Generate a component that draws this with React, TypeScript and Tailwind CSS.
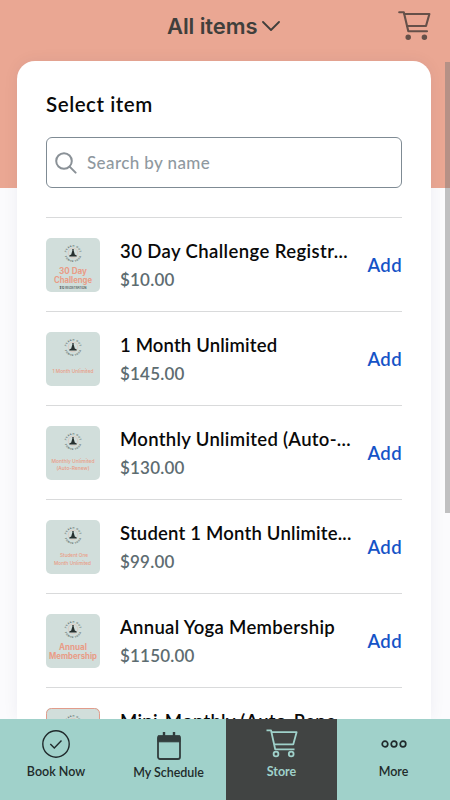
import React from "react";

type Line = { text: string; x: number; y: number; size: number; dark?: boolean; width: number };
type Item = { name: string; price: string; spacing: string; art: Line[]; framed?: boolean };

const items: Item[] = [
  {
    name: "30 Day Challenge Registr...",
    price: "$10.00",
    spacing: "tracking-[0.4px]",
    art: [
      { text: "30 Day", x: 27, y: 35.8, size: 8.3, width: 28 },
      { text: "Challenge", x: 27, y: 44.5, size: 8.3, width: 38 },
      { text: "$10 REGISTRATION", x: 27, y: 50.6, size: 3.2, dark: true, width: 27 },
    ],
  },
  {
    name: "1 Month Unlimited",
    price: "$145.00",
    spacing: "tracking-[0.15px]",
    art: [{ text: "1 Month Unlimited", x: 27, y: 41, size: 5.2, width: 41 }],
  },
  {
    name: "Monthly Unlimited (Auto-...",
    price: "$130.00",
    spacing: "tracking-[0.3px]",
    art: [
      { text: "Monthly Unlimited", x: 27, y: 37.3, size: 5.3, width: 43 },
      { text: "(Auto-Renew)", x: 27, y: 43.8, size: 5.3, width: 33 },
    ],
  },
  {
    name: "Student 1 Month Unlimite...",
    price: "$99.00",
    spacing: "tracking-[0.2px]",
    art: [
      { text: "Student One", x: 28, y: 37.3, size: 5.2, width: 28 },
      { text: "Month Unlimited", x: 26.5, y: 44.5, size: 5.2, width: 37 },
    ],
  },
  {
    name: "Annual Yoga Membership",
    price: "$1150.00",
    spacing: "tracking-[0.32px]",
    art: [
      { text: "Annual", x: 27, y: 36.2, size: 8.4, width: 28 },
      { text: "Membership", x: 27, y: 45, size: 8.4, width: 48 },
    ],
  },
  {
    name: "Mini-Monthly (Auto-Rene...",
    price: "$89.00",
    spacing: "tracking-[0.25px]",
    framed: true,
    art: [],
  },
];

function Thumb({ item }: { item: Item }) {
  return (
    <svg viewBox="0 0 54 54" className="h-[54px] w-[54px] shrink-0" fontFamily="Inter, sans-serif">
      <defs>
        <path id="arcTop" d="M20.2 15.5a6.8 6.8 0 0 1 13.6 0" />
        <path id="arcBottom" d="M18.4 15.5a8.6 8.6 0 0 0 17.2 0" />
      </defs>
      <rect width="54" height="54" rx="5" fill="#d1dedb" />
      {item.framed && <rect x="0.5" y="0.5" width="53" height="53" rx="5" fill="none" stroke="#e29c8b" />}
      <circle cx="27" cy="15" r="4.8" fill="none" stroke="#e3b9ab" strokeWidth="0.5" />
      <g fontSize="2.4" fontWeight="600" fill="#4a5654">
        <text textAnchor="middle">
          <textPath href="#arcTop" startOffset="50%" textLength="19">PEACH OUT</textPath>
        </text>
        <text textAnchor="middle">
          <textPath href="#arcBottom" startOffset="50%" textLength="21">POWER YOGA</textPath>
        </text>
      </g>
      <g fill="#27302f">
        <circle cx="27" cy="12" r="0.9" />
        <path d="M26.2 13.1h1.6l1 3.4 1.9 1v1h-7.4v-1l1.9-1z" />
      </g>
      {item.art.map((l) => (
        <text
          key={l.text}
          x={l.x}
          y={l.y}
          fontSize={l.size}
          fontWeight={l.size > 7 ? 700 : 500}
          fill={l.dark ? "#34403e" : "#e99c86"}
          textAnchor="middle"
          textLength={l.width}
          lengthAdjust="spacingAndGlyphs"
        >
          {l.text}
        </text>
      ))}
    </svg>
  );
}

function HeaderCart() {
  return (
    <svg viewBox="0 0 33 30" className="h-[30px] w-[33px]" fill="none" stroke="#655049" strokeWidth="2.1" strokeLinecap="round" strokeLinejoin="round">
      <path d="M1.2 1.3H5.8L10.3 20.3H29" />
      <path d="M6.5 3H31.4L28 15H9.3" />
      <circle cx="10.2" cy="26.3" r="1.7" fill="#655049" />
      <circle cx="26.4" cy="26.3" r="1.7" fill="#655049" />
    </svg>
  );
}

function StoreCart() {
  return (
    <svg viewBox="0 0 32 30" className="h-[30px] w-8" fill="none" stroke="#9fd1ca" strokeWidth="1.8" strokeLinejoin="round">
      <path d="M.5 1.3H5L9.2 20.3H28.5" />
      <path d="M5.5 3.2H30.6L27.3 15.3H8.2" />
      <circle cx="10" cy="25" r="2.4" />
      <circle cx="25.2" cy="25" r="2.4" />
    </svg>
  );
}

export default function App() {
  return (
    <div className="relative flex h-[800px] w-[450px] flex-col overflow-hidden bg-[linear-gradient(to_bottom,#eaa793_188px,#fbfbfd_188px)] font-['Lato','Open_Sans',sans-serif]">
      <header className="flex h-[61px] shrink-0 items-start pl-[167px] pr-[19px]">
        <h1 className="mt-[11px] whitespace-nowrap font-['Inter',sans-serif] text-[22px] font-semibold leading-[30px] tracking-[-0.1px] text-[#403f3c]">
          All items
        </h1>
        <svg viewBox="0 0 18 10" className="ml-[5px] mt-[21px] h-[10px] w-[18px]" fill="none" stroke="#403f3c" strokeWidth="1.8" strokeLinecap="round" strokeLinejoin="round">
          <path d="M1 1l8 8 8-8" />
        </svg>
        <div className="ml-auto mt-[11px]">
          <HeaderCart />
        </div>
      </header>

      <main className="ml-[17px] min-h-0 w-[414px] flex-1 overflow-hidden rounded-t-[18px] bg-white px-[29px] shadow-[0_0_16px_rgba(40,40,80,0.06)]">
        <h2 className="mt-[29px] text-[20.5px] font-semibold leading-7 tracking-[0.55px] text-[#090909]">Select item</h2>
        <div className="mt-[19px] flex h-[51px] items-center rounded-[6px] border border-[#7f8b94] pl-2">
          <svg viewBox="0 0 22 22" className="h-[22px] w-[22px]" fill="none" stroke="#8a9197" strokeWidth="2" strokeLinecap="round">
            <circle cx="9" cy="9" r="7.8" />
            <path d="M14.6 14.6l6 6" />
          </svg>
          <span className="ml-[10px] text-[17px] font-medium leading-6 tracking-[0.4px] text-[#8f999f]">Search by name</span>
        </div>
        <ul className="mt-[29px]">
          {items.map((item) => (
            <li key={item.name} className="flex h-[94px] items-center border-t border-[#d9dadb] pb-px pt-[2px]">
              <Thumb item={item} />
              <div className="ml-5 min-w-0 flex-1 pt-px">
                <div className={`whitespace-nowrap text-[18.5px] font-semibold leading-7 text-[#090909] ${item.spacing}`}>{item.name}</div>
                <div className="text-[17px] font-semibold leading-[30px] tracking-[0.2px] text-[#5d6c71]">{item.price}</div>
              </div>
              <span className="text-[18.5px] font-semibold leading-7 tracking-[0.4px] text-[#1553c7]">Add</span>
            </li>
          ))}
        </ul>
      </main>

      <div className="absolute right-0 top-[62px] h-[451px] w-[5px] bg-[#777]/45" />

      <nav className="grid h-[81px] shrink-0 grid-cols-[113px_113px_111px_113px] bg-[#a0d1ca] text-[12.5px] font-semibold leading-5 text-[#222b2a]">
        <div className="flex flex-col items-center pr-px pt-[11px]">
          <svg viewBox="0 0 28 28" className="h-7 w-7" fill="none" stroke="#202a2c" strokeWidth="1.4">
            <circle cx="14" cy="14" r="13.2" />
            <path d="M8.3 14l4 4 7.2-7.5" />
          </svg>
          <span className="mt-1">Book Now</span>
        </div>
        <div className="flex flex-col items-center pr-[2px] pt-[13px]">
          <svg viewBox="0 0 24 28" className="h-7 w-6" fill="none" stroke="#323d3d">
            <rect x="1" y="4.3" width="22" height="22.7" rx="2" strokeWidth="1.8" />
            <path d="M1 3.8h22v6H1z" fill="#323d3d" />
            <path d="M7 0v5M17 0v5" strokeWidth="2.4" />
          </svg>
          <span className="mt-[3px] tracking-[-0.05px]">My Schedule</span>
        </div>
        <div className="flex flex-col items-center bg-[#414443] pt-[10px] text-[#9fd1ca]">
          <StoreCart />
          <span className="mt-[3px] font-bold">Store</span>
        </div>
        <div className="flex flex-col items-center pt-[20px]">
          <svg viewBox="0 0 26 10" className="h-[10px] w-[26px]" fill="none" stroke="#202a2c" strokeWidth="1.7">
            <circle cx="4" cy="5" r="2.8" />
            <circle cx="13" cy="5" r="2.8" />
            <circle cx="22" cy="5" r="2.8" />
          </svg>
          <span className="mt-[13px]">More</span>
        </div>
      </nav>
    </div>
  );
}
